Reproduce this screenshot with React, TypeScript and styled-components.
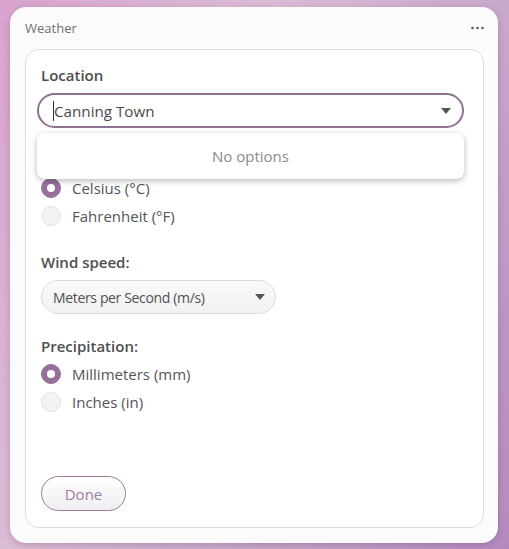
import * as React from "react";
import styled, { createGlobalStyle } from "styled-components";

const GlobalStyle = createGlobalStyle`
  html, body {
    margin: 0;
    padding: 0;
    height: 100%;
  }
  body {
    font-family: "Open Sans", "Noto Sans", sans-serif;
    background: linear-gradient(115deg, #d8a3ce 0%, #dbbcd6 35%, #c9a9cc 65%, #b38abf 100%);
  }
  #root {
    height: 100%;
  }
`;

const Page = styled.div`
  box-sizing: border-box;
  height: 549px;
  padding: 7px 11px 6px 10px;
  display: flex;
`;

const Card = styled.div`
  flex: 1;
  display: flex;
  flex-direction: column;
  background: #fbfbfb;
  border-radius: 16px;
  box-shadow: 0 2px 6px rgba(80, 40, 80, 0.25);
  padding: 0 14px 15px 15px;
`;

const CardHeader = styled.div`
  height: 42px;
  display: flex;
  align-items: center;
  justify-content: space-between;
`;

const CardTitle = styled.span`
  font-size: 13px;
  color: #707070;
  margin-top: -1px;
`;

const MoreButton = styled.span`
  display: flex;
  margin-right: 0;
  margin-top: -1px;
  color: #5a5a5a;
`;

const Panel = styled.div`
  flex: 1;
  position: relative;
  display: flex;
  flex-direction: column;
  gap: 22px;
  background: #fff;
  border: 1px solid #dedede;
  border-radius: 14px;
  padding: 15px 16px 16px 15px;
`;

const Section = styled.div`
  display: flex;
  flex-direction: column;
`;

const Label = styled.div<{ $gap?: number }>`
  font-size: 15px;
  font-weight: 600;
  line-height: 20px;
  color: #4e4e4e;
  margin-bottom: ${(p) => p.$gap ?? 4}px;
`;

const ComboBox = styled.div`
  position: relative;
  height: 35px;
  box-sizing: border-box;
  margin: 0 3px 0 -4px;
  border: 2px solid #8f7292;
  border-radius: 18px;
  display: flex;
  align-items: center;
  padding: 0 11px 0 14px;
  background: #fff;
`;

const ComboText = styled.span`
  flex: 1;
  font-size: 15.2px;
  color: #4a4a4a;
  border-left: 1px solid #333;
  line-height: 20px;
`;

const Caret = styled.span`
  width: 0;
  height: 0;
  border-left: 5px solid transparent;
  border-right: 5px solid transparent;
  border-top: 6px solid #555;
`;

const Popup = styled.div`
  position: absolute;
  left: -2px;
  right: -2px;
  top: 38px;
  height: 46px;
  z-index: 2;
  background: #fff;
  border-radius: 8px;
  box-shadow: 0 2px 6px rgba(0, 0, 0, 0.28);
  display: flex;
  align-items: center;
  justify-content: center;
  font-size: 15px;
  color: #8a8a8a;
`;

const RadioRow = styled.label`
  display: flex;
  align-items: center;
  height: 28px;
  gap: 11px;
  font-size: 15px;
  color: #555;
`;

const RadioDot = styled.span<{ $on?: boolean }>`
  box-sizing: border-box;
  width: 20px;
  height: 20px;
  border-radius: 50%;
  background: ${(p) => (p.$on ? "#96709a" : "#f3f3f3")};
  border: 1px solid ${(p) => (p.$on ? "#96709a" : "#e2e2e2")};
  display: flex;
  align-items: center;
  justify-content: center;
  &::after {
    content: "";
    display: ${(p) => (p.$on ? "block" : "none")};
    width: 8px;
    height: 8px;
    border-radius: 50%;
    background: #fff;
  }
`;

const Select = styled.div`
  box-sizing: border-box;
  width: 235px;
  height: 34px;
  border: 1px solid #dcdcdc;
  border-radius: 17px;
  background: linear-gradient(#fafafa, #f1f1f1);
  display: flex;
  align-items: center;
  justify-content: space-between;
  padding: 0 10px 0 11px;
  font-size: 14px;
  letter-spacing: -0.35px;
  color: #505050;
`;

const DoneButton = styled.button`
  margin-top: auto;
  align-self: flex-start;
  width: 85px;
  height: 35px;
  border: 1px solid #9c7c9f;
  border-radius: 18px;
  background: linear-gradient(#ffffff, #f1eef1);
  font-family: inherit;
  font-size: 15px;
  color: #9f7ca4;
  cursor: pointer;
`;

function Radio({ on, children }: { on?: boolean; children: React.ReactNode }) {
  return (
    <RadioRow>
      <RadioDot $on={on} />
      {children}
    </RadioRow>
  );
}

function MoreIcon() {
  return (
    <svg width="13" height="4" viewBox="0 0 13 4">
      <circle cx="1.5" cy="2" r="1.3" fill="currentColor" />
      <circle cx="6.5" cy="2" r="1.3" fill="currentColor" />
      <circle cx="11.5" cy="2" r="1.3" fill="currentColor" />
    </svg>
  );
}

export default function App() {
  return (
    <>
      <GlobalStyle />
      <Page>
        <Card>
          <CardHeader>
            <CardTitle>Weather</CardTitle>
            <MoreButton>
              <MoreIcon />
            </MoreButton>
          </CardHeader>
          <Panel>
            <Section>
              <Label $gap={8}>Location</Label>
              <ComboBox>
                <ComboText>Canning Town</ComboText>
                <Caret />
                <Popup>No options</Popup>
              </ComboBox>
            </Section>

            <Section>
              <Label>Temperature:</Label>
              <Radio on>Celsius (°C)</Radio>
              <Radio>Fahrenheit (°F)</Radio>
            </Section>

            <Section>
              <Label $gap={8}>Wind speed:</Label>
              <Select>
                <span>Meters per Second (m/s)</span>
                <Caret />
              </Select>
            </Section>

            <Section>
              <Label>Precipitation:</Label>
              <Radio on>Millimeters (mm)</Radio>
              <Radio>Inches (in)</Radio>
            </Section>

            <DoneButton>Done</DoneButton>
          </Panel>
        </Card>
      </Page>
    </>
  );
}
